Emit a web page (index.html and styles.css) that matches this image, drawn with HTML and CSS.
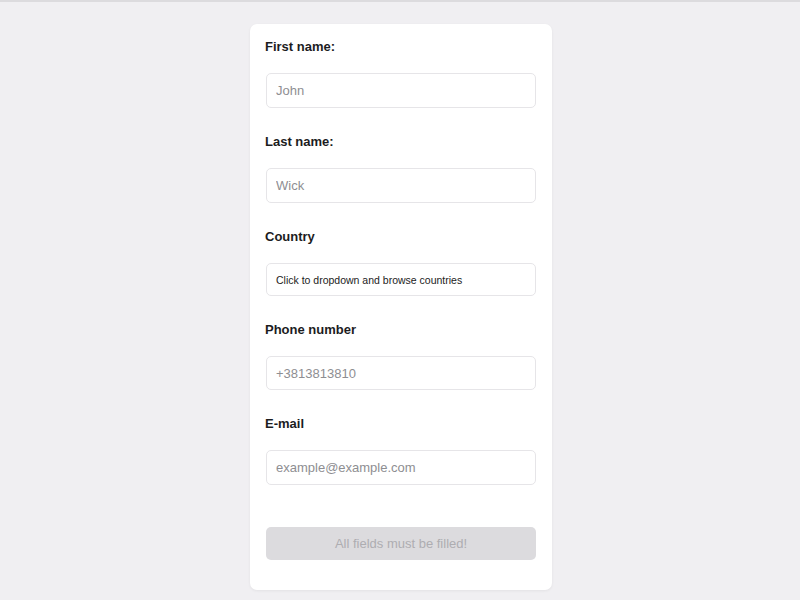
FILE: index.html
```html
<!DOCTYPE html>
<html lang="en">
<head>
<meta charset="utf-8">
<title>Form</title>
<link rel="stylesheet" href="styles.css">
</head>
<body>
<div class="topbar"></div>
<div class="page">
<main class="card">
  <form class="form">
    <div class="field">
      <label class="label" for="fn">First name:</label>
      <input class="input" id="fn" type="text" placeholder="John">
    </div>
    <div class="field">
      <label class="label" for="ln">Last name:</label>
      <input class="input" id="ln" type="text" placeholder="Wick">
    </div>
    <div class="field">
      <label class="label">Country</label>
      <div class="select">Click to dropdown and browse countries</div>
    </div>
    <div class="field">
      <label class="label" for="ph">Phone number</label>
      <input class="input input-short" id="ph" type="text" placeholder="+3813813810">
    </div>
    <div class="field">
      <label class="label" for="em">E-mail</label>
      <input class="input" id="em" type="text" placeholder="example@example.com">
    </div>
    <button class="submit" type="button" disabled>All fields must be filled!</button>
  </form>
</main>
</div>
</body>
</html>
```

FILE: styles.css
```css
* { box-sizing: border-box; }
html, body { margin: 0; padding: 0; }
body {
  background: #f0eff2;
  font-family: "Liberation Sans", Arial, sans-serif;
  color: #1c1c1e;
  min-height: 600px;
}
.topbar {
  height: 2px;
  background: #dcdbde;
}
.page {
  padding-left: 2px;
}
.card {
  width: 302px;
  margin: 22px auto 0;
  background: #ffffff;
  border-radius: 7px;
  box-shadow: 0 1px 3px rgba(0,0,0,0.06);
  padding: 15px 15px 30px;
}
.form {
  display: flex;
  flex-direction: column;
}
.field {
  display: flex;
  flex-direction: column;
  margin-bottom: 26px;
}
.label {
  font-size: 13px;
  font-weight: bold;
  line-height: 16px;
  color: #1c1c1e;
  margin-bottom: 18px;
}
.input {
  height: 35px;
  margin: 0 1px;
  border: 1px solid #e6e5e8;
  border-radius: 5px;
  padding: 0 9px;
  font-family: "Liberation Sans", Arial, sans-serif;
  font-size: 13px;
  color: #333;
  background: #fff;
  outline: none;
}
.input-short { height: 34px; }
.input::placeholder { color: #8e8e92; }
.select {
  height: 33px;
  margin: 0 1px;
  border: 1px solid #e6e5e8;
  border-radius: 5px;
  padding: 0 9px;
  display: flex;
  align-items: center;
  font-size: 10.5px;
  color: #222;
}
.submit {
  margin: 16px 1px 0;
  height: 33px;
  border: none;
  border-radius: 5px;
  background: #dcdbde;
  color: #aeadb1;
  font-family: "Liberation Sans", Arial, sans-serif;
  font-size: 13px;
}
```
